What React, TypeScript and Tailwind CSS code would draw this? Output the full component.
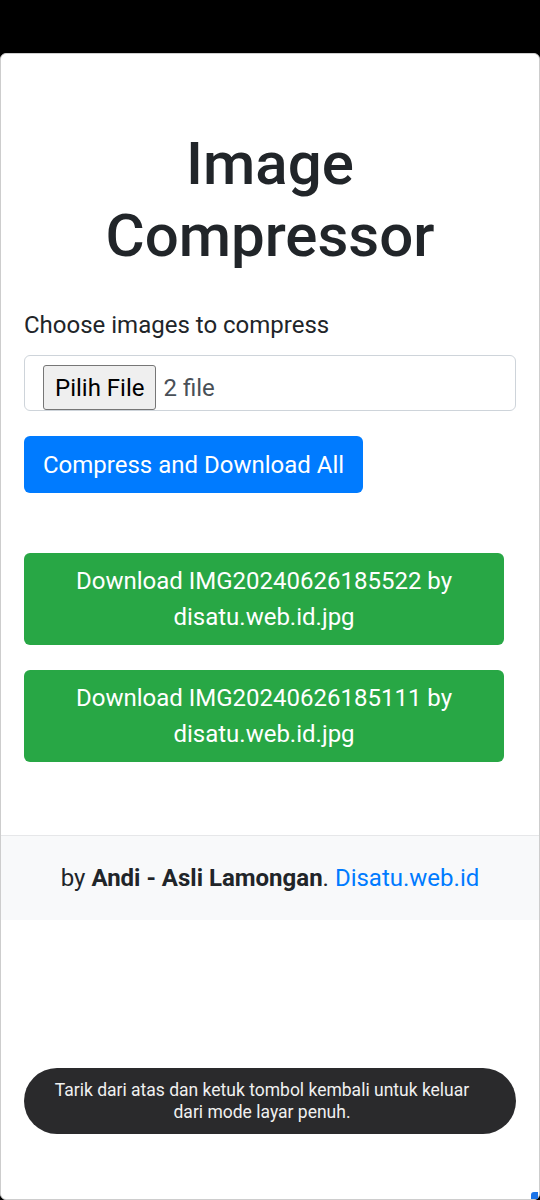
export default function App() {
    const files = ['IMG20240626185522 by disatu.web.id.jpg', 'IMG20240626185111 by disatu.web.id.jpg'];

    return (
        <div className="relative h-[1200px] bg-black pt-[53px] font-['Roboto',sans-serif] text-[#212529]">
            <div className="relative flex h-[1147px] flex-col overflow-hidden rounded-[6px] border border-[#cdcdcd] bg-white">
                <div className="px-[23px] pb-[73px] pt-[74px]">
                    <h1 className="mb-[35px] text-center text-[60px] font-medium leading-[72px]">
                        Image
                        <br />
                        Compressor
                    </h1>
                    <label className="mb-[12px] block text-[24px] leading-[36px]">Choose images to compress</label>
                    <div className="flex h-[56px] items-center rounded-[6px] border border-[#ced4da] pl-[18px] pt-[9px]">
                        <span className="flex h-[45px] items-center rounded-[3px] border border-[#767676] bg-[#efefef] px-[11px] text-[24px] leading-none text-black">Pilih File</span>
                        <span className="ml-[7px] text-[24px] leading-none text-[#495057]">2 file</span>
                    </div>
                    <button className="mt-[25px] h-[57px] rounded-[6px] bg-[#007bff] px-[19px] text-[24px] leading-[36px] text-white">
                        Compress and Download All
                    </button>
                    <div className="mr-[12px] mt-[60px] flex flex-col gap-[25px]">
                        {files.map((name) => (
                            <button key={name} className="rounded-[6px] bg-[#28a745] px-[18px] py-[10px] text-center text-[24px] leading-[36px] text-white">
                                Download {name}
                            </button>
                        ))}
                    </div>
                </div>
                <div className="border-t border-[#e6e7e9] bg-[#f8f9fa] py-[24px] text-center text-[24px] leading-[36px]">
                    by <b className="font-bold">Andi - Asli Lamongan</b>. <a className="text-[#007bff]">Disatu.web.id</a>
                </div>
            </div>
            <div className="absolute left-[24px] top-[1068px] flex h-[66px] w-[492px] items-center justify-center rounded-full bg-[#2a2a2c] pl-[18px] pr-[34px] text-center text-[17.5px] leading-[22px] text-[#f0f0f0]">
                Tarik dari atas dan ketuk tombol kembali untuk keluar dari mode layar penuh.
            </div>
            <div className="absolute right-[2px] top-[1192px] h-[7px] w-[7px] rounded-tl-[3px] bg-[#1a73e8]" />
        </div>
    );
}
